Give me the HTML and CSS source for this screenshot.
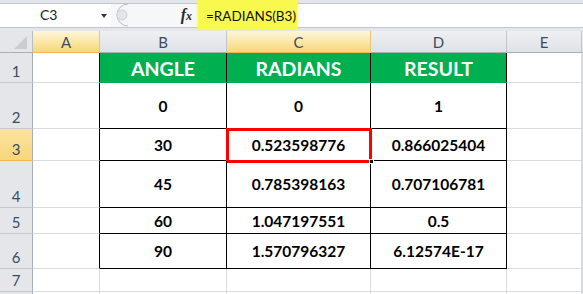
FILE: index.html
```html
<!DOCTYPE html>
<html>
<head>
<meta charset="utf-8">
<link rel="stylesheet" href="styles.css">
</head>
<body>
<div class="app">
  <div class="toolbar">
    <div class="namebox">
      <span class="ref">C3</span>
      <span class="dd"></span>
    </div>
    <div class="mid">
      <svg class="knob" width="16" height="24" viewBox="0 0 16 24">
        <path d="M15 1 A11 11 0 0 0 15 23" fill="#f4f5f7" stroke="#b9bdc3"/>
        <circle cx="9" cy="12" r="5" fill="#e3e5e8" stroke="#cfd2d6"/>
      </svg>
      <span class="fx">f<span class="x">x</span></span>
    </div>
    <div class="formula">
      <span class="hl">=RADIANS(B3)</span>
    </div>
  </div>
  <div class="sheet">
    <div class="corner"><span class="tri"></span></div>
    <div class="ch sel">A</div>
    <div class="ch">B</div>
    <div class="ch sel">C</div>
    <div class="ch">D</div>
    <div class="ch">E</div>
    <div class="ch last"></div>

    <div class="rh">1</div>
    <div class="c lb"></div>
    <div class="t h">ANGLE</div>
    <div class="t h">RADIANS</div>
    <div class="t h">RESULT</div>
    <div class="c"></div>
    <div class="c"></div>

    <div class="rh">2</div>
    <div class="c lb"></div>
    <div class="t">0</div>
    <div class="t">0</div>
    <div class="t">1</div>
    <div class="c"></div>
    <div class="c"></div>

    <div class="rh sel">3</div>
    <div class="c lb"></div>
    <div class="t">30</div>
    <div class="t active">0.523598776<span class="handle"></span></div>
    <div class="t">0.866025404</div>
    <div class="c"></div>
    <div class="c"></div>

    <div class="rh">4</div>
    <div class="c lb"></div>
    <div class="t">45</div>
    <div class="t">0.785398163</div>
    <div class="t">0.707106781</div>
    <div class="c"></div>
    <div class="c"></div>

    <div class="rh">5</div>
    <div class="c lb"></div>
    <div class="t">60</div>
    <div class="t">1.047197551</div>
    <div class="t">0.5</div>
    <div class="c"></div>
    <div class="c"></div>

    <div class="rh">6</div>
    <div class="c lb"></div>
    <div class="t">90</div>
    <div class="t">1.570796327</div>
    <div class="t">6.12574E-17</div>
    <div class="c"></div>
    <div class="c"></div>

    <div class="rh">7</div>
    <div class="c"></div>
    <div class="c"></div>
    <div class="c"></div>
    <div class="c"></div>
    <div class="c"></div>
    <div class="c"></div>

    <div class="rh"></div>
    <div class="c"></div>
    <div class="c"></div>
    <div class="c"></div>
    <div class="c"></div>
    <div class="c"></div>
    <div class="c"></div>
  </div>
</div>
</body>
</html>
```

FILE: styles.css
```css
* { box-sizing: border-box; }
html, body { margin: 0; padding: 0; background: #fff; }
body { width: 583px; height: 294px; overflow: hidden; font-family: Lato, "Liberation Sans", sans-serif; }

.app { display: flex; flex-direction: column; width: 583px; height: 294px; }

.toolbar {
  height: 31px;
  display: flex;
  align-items: stretch;
  background: #e3e6ea;
  padding-top: 3px;
  padding-bottom: 3px;
}
.namebox {
  width: 111px;
  background: #fff;
  border-top: 1px solid #c3c7cc;
  border-bottom: 1px solid #c3c7cc;
  display: flex;
  align-items: center;
  position: relative;
}
.ref {
  font-size: 14px;
  color: #1a1a1a;
  margin-left: 40px;
  margin-top: -2px;
}
.dd {
  margin-left: auto;
  margin-right: 4px;
  width: 0; height: 0;
  border-left: 3.5px solid transparent;
  border-right: 3.5px solid transparent;
  border-top: 4px solid #3a3a3a;
}
.mid {
  width: 87px;
  background: #f6f7f8;
  border-top: 1px solid #c3c7cc;
  border-bottom: 1px solid #c3c7cc;
  display: flex;
  align-items: center;
  padding-left: 2px;
}
.knob { display: block; margin-top: -1px; }
.fx {
  margin-left: auto;
  margin-right: 6px;
  font-family: "Liberation Serif", "DejaVu Serif", serif;
  font-style: italic;
  font-weight: 700;
  font-size: 16px;
  color: #2a2a2a;
  margin-top: -2px;
}
.fx .x { font-size: 12px; }
.formula {
  flex: 1;
  background: #fff;
  border-top: 1px solid #c3c7cc;
  border-bottom: 1px solid #c3c7cc;
  position: relative;
}
.hl {
  position: absolute;
  left: 0;
  top: -4px;
  width: 99px;
  height: 29px;
  background: #f8f84e;
  box-shadow: 0 0 2px 1px rgba(248,248,78,0.6);
  font-size: 13.5px;
  color: #111;
  padding-left: 8px;
  display: flex;
  align-items: center;
  padding-top: 2px;
  white-space: nowrap;
}

.sheet {
  flex: 1;
  display: grid;
  grid-template-columns: 33px 67px 127px 144px 136px 75px 1fr;
  grid-template-rows: 22px 30px 46px 32px 47px 26px 35px 23px 1fr;
  overflow: hidden;
}
.sheet > div {
  border-right: 1px solid #d9dbde;
  border-bottom: 1px solid #d9dbde;
}
.corner {
  background: #e4e6ea;
  border-right: 1px solid #b8bdc4 !important;
  border-bottom: 1px solid #a9afb7 !important;
  position: relative;
}
.tri {
  position: absolute;
  right: 5px;
  bottom: 3px;
  width: 0; height: 0;
  border-left: 13px solid transparent;
  border-bottom: 13px solid #c9ccd1;
}
.ch {
  background: linear-gradient(#eef0f2, #dfe2e6);
  border-right: 1px solid #c2c6cc !important;
  border-bottom: 1px solid #a9afb7 !important;
  color: #3c4c5e;
  font-size: 15px;
  display: flex;
  align-items: center;
  justify-content: center;
  padding-top: 1px;
}
.ch.sel {
  background: linear-gradient(#fdf6dc, #fbe6a4 55%, #f9d67a);
  border-bottom: 1px solid #f0b94d !important;
  border-right: 1px solid #e8c57a !important;
}
.ch.last { border-right: none !important; }
.rh {
  background: #e4e6ea;
  border-right: 1px solid #a9afb7 !important;
  border-bottom: 1px solid #c5c9ce !important;
  color: #3c4c5e;
  font-size: 15px;
  display: flex;
  align-items: flex-end;
  justify-content: center;
  padding-bottom: 3px;
  line-height: 15px;
}
.rh.sel {
  background: linear-gradient(#fbe3a0, #f9d67a);
  border-bottom: 1px solid #f0b94d !important;
}
.lb { border-right: 1px solid #000 !important; }
.t {
  border-right: 1px solid #000 !important;
  border-bottom: 1px solid #000 !important;
  display: flex;
  align-items: center;
  justify-content: center;
  font-weight: 700;
  font-size: 15.5px;
  color: #000;
  position: relative;
}
.t.h {
  background: #00b050;
  color: #fff;
  font-size: 19.5px;
  border-bottom: 1px solid #00b050 !important;
  padding-top: 2px;
}
.active::after {
  content: "";
  position: absolute;
  left: -1px;
  top: -1px;
  right: -2px;
  bottom: -3px;
  border: 3px solid #ff0000;
}
.handle {
  position: absolute;
  right: -4px;
  bottom: -4px;
  width: 5px;
  height: 5px;
  background: #000;
  border: 1px solid #fff;
  z-index: 2;
}
```
